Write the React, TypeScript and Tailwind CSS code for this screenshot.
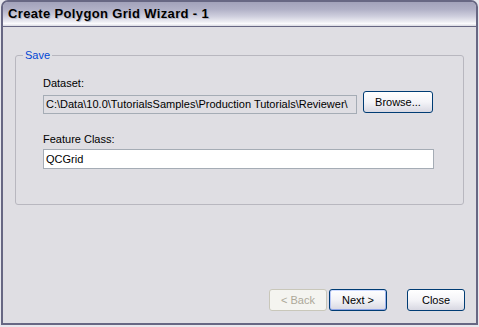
import React from 'react';

const font = "font-['Liberation_Sans',Arial,sans-serif] text-[11px] leading-[13px]";
const ui = `${font} text-black`;

function XpButton({ label, variant = 'normal', className = '' }: { label: string; variant?: 'normal' | 'default' | 'disabled'; className?: string }) {
  const look =
    variant === 'disabled'
      ? 'border-[#c9c7ba] bg-[#f4f4f0] text-[#aca899]'
      : variant === 'default'
        ? 'border-[#003c74] bg-[linear-gradient(to_bottom,#ffffff_0%,#f2f2f6_50%,#d8d8e2_100%)] text-black shadow-[inset_0_1px_0_#cfdcff,inset_0_-1px_0_#8ea4e8,inset_1px_0_0_#b6c6f6,inset_-1px_0_0_#9db2ee]'
        : 'border-[#003c74] bg-[linear-gradient(to_bottom,#ffffff_0%,#f4f4f8_50%,#d8d8e2_100%)] text-black';
  return (
    <button className={`${font} flex items-center justify-center rounded-[3px] border ${look} ${className}`}>
      {label}
    </button>
  );
}

export default function App() {
  return (
    <div className="w-[479px] h-[327px] bg-[#e8e8ee] pl-px pr-px pb-[2px] flex">
      <div className="flex-1 flex flex-col border-2 border-[#676783] rounded-t-[7px] overflow-hidden bg-[#dfdee3]">
        {/* title bar */}
        <div className="h-[25px] shrink-0 flex items-center pl-[5px] border-b border-[#676783] bg-[linear-gradient(to_bottom,#a2a2ba_0%,#b0b0c6_30%,#cfcfde_60%,#ececf2_82%,#fbfbfd_90%,#dadae2_100%)]">
          <span className="font-['Liberation_Sans',Arial,sans-serif] font-bold text-[13px] leading-[16px] tracking-[0.35px] text-black [text-shadow:1px_1px_0_#b4b4c4]">
            Create Polygon Grid Wizard - 1
          </span>
        </div>

        {/* body */}
        <div className="flex-1 flex flex-col px-[12px] pt-[28px]">
          <div className="relative h-[150px] border border-[#b8b7bf] rounded-[3px] pl-[27px] pr-[30px] pt-[21px]">
            <span className={`${font} absolute -top-[7px] left-[7px] px-[2px] bg-[#dfdee3] text-[#0046d5]`}>Save</span>

            <div className={ui}>Dataset:</div>
            <div className="flex items-start mt-px">
              <div className={`${ui} mt-[4px] w-[314px] h-[19px] border border-[#a5acb5] bg-[#dfdee3] pl-[2px] flex items-center whitespace-nowrap overflow-hidden`}>
                C:\Data\10.0\TutorialsSamples\Production Tutorials\Reviewer\
              </div>
              <XpButton label="Browse..." className="ml-[6px] w-[70px] h-[22px]" />
            </div>

            <div className={`${ui} mt-[19px]`}>Feature Class:</div>
            <div className={`${ui} mt-[3px] w-[391px] h-[20px] border border-[#a5acb5] bg-white pl-[2px] flex items-center`}>
              QCGrid
            </div>
          </div>

          <div className="flex-1" />

          <div className="flex justify-end items-center -mr-px pb-[12px]">
            <XpButton label="< Back" variant="disabled" className="w-[58px] h-[22px]" />
            <XpButton label="Next >" variant="default" className="ml-[2px] w-[58px] h-[22px]" />
            <XpButton label="Close" className="ml-[20px] w-[58px] h-[22px]" />
          </div>
        </div>
      </div>
    </div>
  );
}
